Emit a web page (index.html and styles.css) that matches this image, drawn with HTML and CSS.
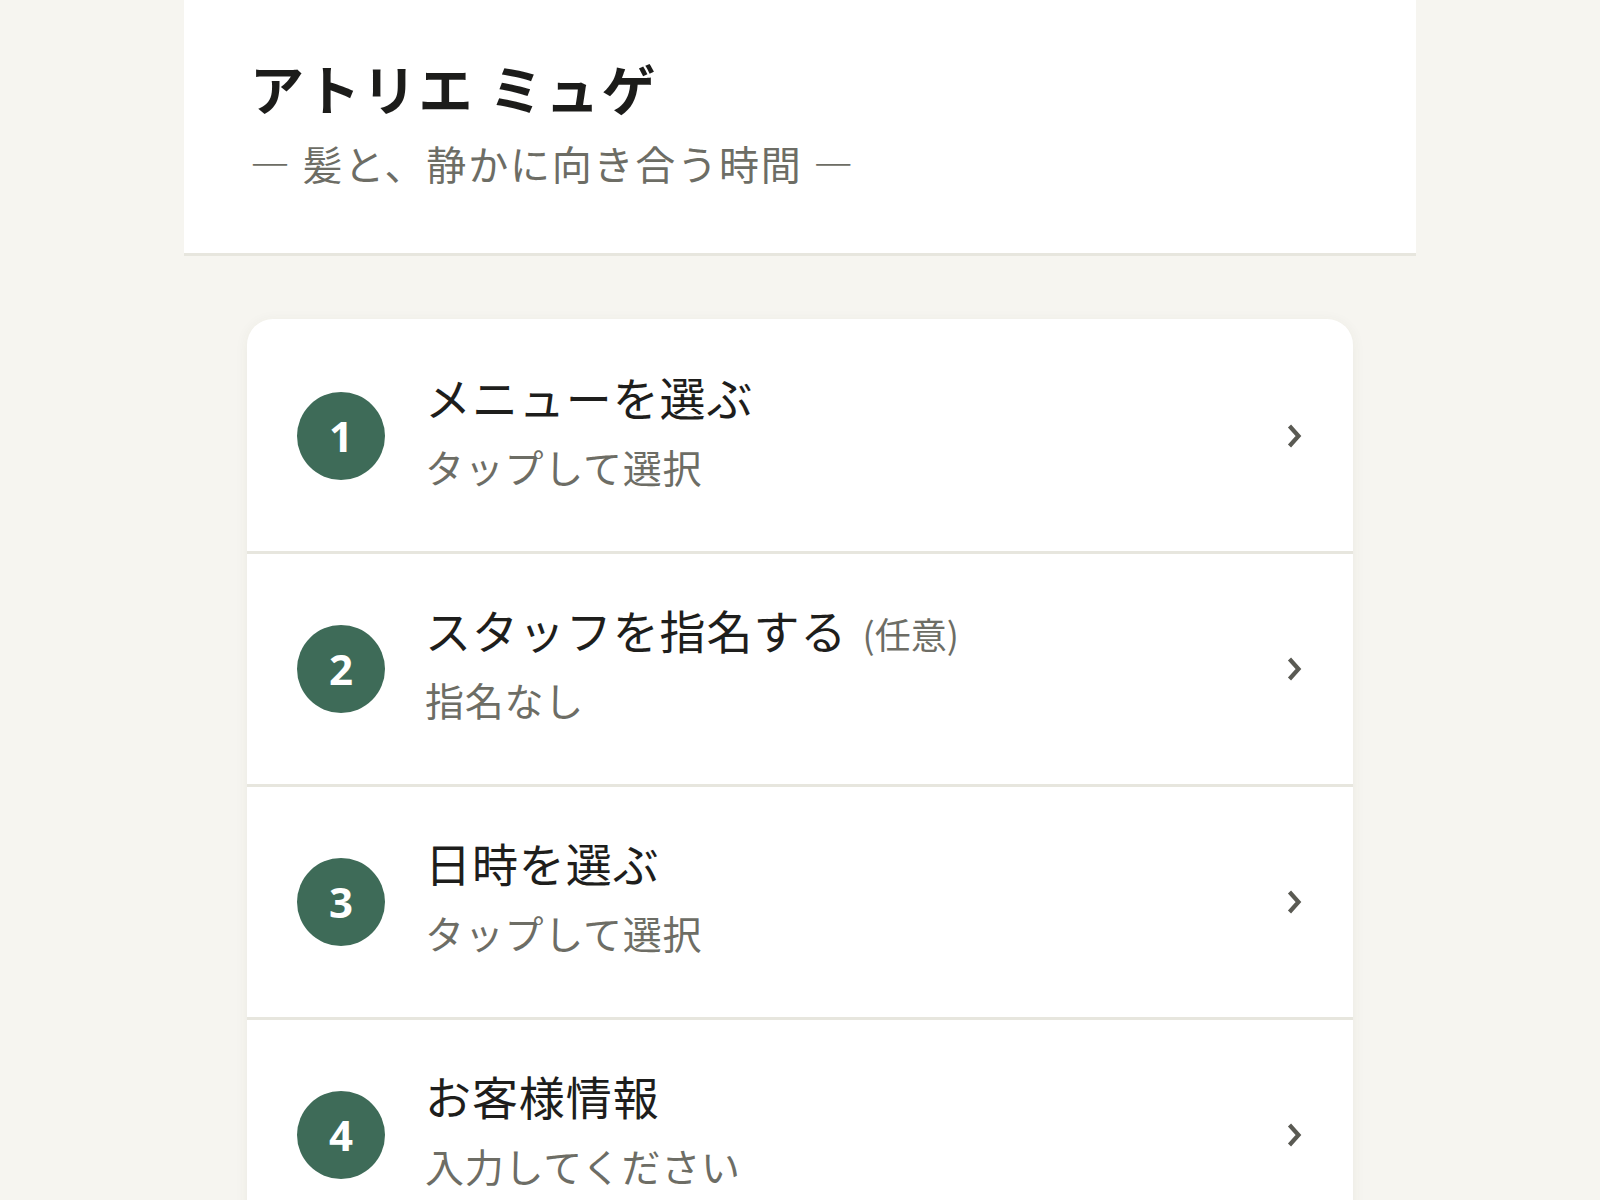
FILE: index.html
```html
<!DOCTYPE html>
<html lang="ja">
<head>
<meta charset="utf-8">
<title>アトリエ ミュゲ</title>
<link rel="stylesheet" href="styles.css">
</head>
<body>
<div class="page">
  <header class="header">
    <h1 class="brand">アトリエ ミュゲ</h1>
    <p class="tagline">— 髪と、静かに向き合う時間 —</p>
  </header>
  <main class="main">
    <section class="card">
      <div class="row">
        <div class="num">1</div>
        <div class="text">
          <div class="ttl">メニューを選ぶ</div>
          <div class="sub">タップして選択</div>
        </div>
        <svg class="chev" viewBox="0 0 16 26" width="16" height="26"><path d="M3.5 3 L12.5 13 L3.5 23" fill="none" stroke="#5a5a53" stroke-width="4.2" stroke-linecap="butt" stroke-linejoin="miter"/></svg>
      </div>
      <div class="row">
        <div class="num">2</div>
        <div class="text">
          <div class="ttl">スタッフを指名する <span class="opt">(任意)</span></div>
          <div class="sub">指名なし</div>
        </div>
        <svg class="chev" viewBox="0 0 16 26" width="16" height="26"><path d="M3.5 3 L12.5 13 L3.5 23" fill="none" stroke="#5a5a53" stroke-width="4.2" stroke-linecap="butt" stroke-linejoin="miter"/></svg>
      </div>
      <div class="row">
        <div class="num">3</div>
        <div class="text">
          <div class="ttl">日時を選ぶ</div>
          <div class="sub">タップして選択</div>
        </div>
        <svg class="chev" viewBox="0 0 16 26" width="16" height="26"><path d="M3.5 3 L12.5 13 L3.5 23" fill="none" stroke="#5a5a53" stroke-width="4.2" stroke-linecap="butt" stroke-linejoin="miter"/></svg>
      </div>
      <div class="row">
        <div class="num">4</div>
        <div class="text">
          <div class="ttl">お客様情報</div>
          <div class="sub">入力してください</div>
        </div>
        <svg class="chev" viewBox="0 0 16 26" width="16" height="26"><path d="M3.5 3 L12.5 13 L3.5 23" fill="none" stroke="#5a5a53" stroke-width="4.2" stroke-linecap="butt" stroke-linejoin="miter"/></svg>
      </div>
    </section>
  </main>
</div>
</body>
</html>
```
FILE: styles.css
```css
* { box-sizing: border-box; }
html, body {
  margin: 0;
  padding: 0;
  background: #f6f5f0;
  font-family: "Noto Sans CJK JP", "Noto Sans", sans-serif;
  color: #1e1e1c;
  overflow: hidden;
}
.page {
  width: 1232px;
  margin: 0 auto;
}
.header {
  background: #ffffff;
  border-bottom: 3px solid #e7e6de;
  padding: 49px 66px 58px;
}
.brand {
  margin: 0;
  font-size: 54px;
  line-height: 78px;
  font-weight: 700;
  letter-spacing: 0.04em;
  color: #1c1c1a;
}
.tagline {
  margin: 4px 0 0;
  font-size: 40px;
  line-height: 64px;
  letter-spacing: 0.045em;
  color: #6d6d65;
}
.main {
  padding: 63px 63px 0;
}
.card {
  background: #ffffff;
  border-radius: 26px 26px 0 0;
  box-shadow: 0 2px 14px rgba(60, 60, 40, 0.06);
  overflow: hidden;
}
.row {
  display: flex;
  align-items: center;
  gap: 40px;
  padding: 45px 51px 45px 50px;
  border-bottom: 3px solid #e7e6de;
}
.row:first-child {
  padding-top: 47px;
}
.num {
  flex: 0 0 88px;
  width: 88px;
  height: 88px;
  border-radius: 50%;
  background: #3e6b58;
  color: #ffffff;
  display: flex;
  align-items: center;
  justify-content: center;
  font-family: "Noto Sans", "Open Sans", sans-serif;
  font-weight: 700;
  font-size: 42px;
  line-height: 1;
}
.text {
  flex: 1;
  display: flex;
  flex-direction: column;
}
.ttl {
  font-size: 46px;
  line-height: 60px;
  letter-spacing: 0.02em;
  color: #1e1e1c;
}
.opt {
  font-size: 36px;
  line-height: 1;
  letter-spacing: 0;
  margin-left: 4px;
  color: #6d6d65;
}
.sub {
  font-size: 39px;
  line-height: 80px;
  letter-spacing: 0.02em;
  color: #6d6d65;
}
.chev {
  flex: 0 0 16px;
  display: block;
}
```
